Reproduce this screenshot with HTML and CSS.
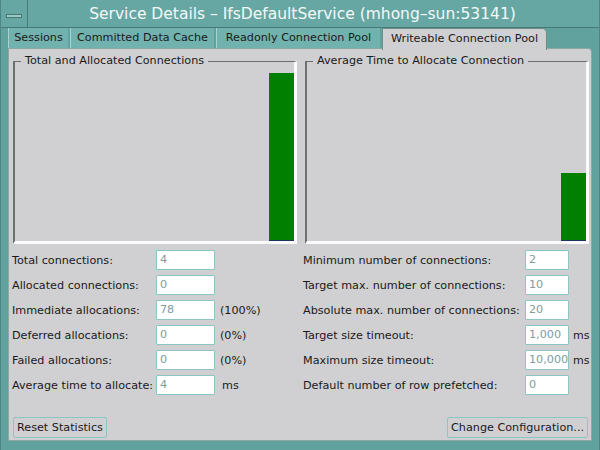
FILE: index.html
```html
<!DOCTYPE html>
<html>
<head>
<meta charset="utf-8">
<link rel="stylesheet" href="styles.css">
</head>
<body>
<div class="window">
  <div class="titlebar">
    <div class="menubtn"><span class="dash"></span></div>
    <div class="title">Service Details – IfsDefaultService (mhong–sun:53141)</div>
  </div>
  <div class="tabs">
    <div class="tab t1">Sessions</div>
    <div class="tab t2">Committed Data Cache</div>
    <div class="tab t3">Readonly Connection Pool</div>
    <div class="tab t4 active">Writeable Connection Pool</div>
  </div>
  <div class="panel">
    <div class="charts">
      <fieldset class="chart">
        <legend>Total and Allocated Connections</legend>
        <div class="plot"><div class="bar" style="height:168px"></div></div>
      </fieldset>
      <fieldset class="chart">
        <legend>Average Time to Allocate Connection</legend>
        <div class="plot"><div class="bar" style="height:68px"></div></div>
      </fieldset>
    </div>
    <div class="forms">
      <div class="form left">
        <span class="lbl">Total connections:</span><span class="fld">4</span><span class="suf"></span>
        <span class="lbl">Allocated connections:</span><span class="fld">0</span><span class="suf"></span>
        <span class="lbl">Immediate allocations:</span><span class="fld">78</span><span class="suf">(100%)</span>
        <span class="lbl">Deferred allocations:</span><span class="fld">0</span><span class="suf">(0%)</span>
        <span class="lbl">Failed allocations:</span><span class="fld">0</span><span class="suf">(0%)</span>
        <span class="lbl">Average time to allocate:</span><span class="fld">4</span><span class="suf ms">ms</span>
      </div>
      <div class="form right">
        <span class="lbl">Minimum number of connections:</span><span class="fld">2</span><span class="suf"></span>
        <span class="lbl">Target max. number of connections:</span><span class="fld">10</span><span class="suf"></span>
        <span class="lbl">Absolute max. number of connections:</span><span class="fld">20</span><span class="suf"></span>
        <span class="lbl">Target size timeout:</span><span class="fld">1,000</span><span class="suf">ms</span>
        <span class="lbl">Maximum size timeout:</span><span class="fld">10,000</span><span class="suf">ms</span>
        <span class="lbl">Default number of row prefetched:</span><span class="fld">0</span><span class="suf"></span>
      </div>
    </div>
    <div class="buttons">
      <button class="btn">Reset Statistics</button>
      <button class="btn">Change Configuration...</button>
    </div>
  </div>
</div>
</body>
</html>
```
FILE: styles.css
```css
* { box-sizing: border-box; }
html, body { margin: 0; padding: 0; }
body {
  width: 600px;
  height: 450px;
  overflow: hidden;
  font-family: "DejaVu Sans", sans-serif;
  font-size: 11px;
  color: #1a1a1a;
  background: #62a29e;
}
.window {
  width: 600px;
  height: 450px;
  display: flex;
  flex-direction: column;
  background: #62a29e;
  border-left: 1px solid #4d8683;
  border-right: 1px solid #4d8683;
}
.titlebar {
  height: 28px;
  display: flex;
  align-items: stretch;
  border-bottom: 1px solid #457a77;
  background: #67a7a3;
}
.menubtn {
  width: 27px;
  border-right: 1px solid #457a77;
  display: flex;
  align-items: center;
  justify-content: center;
  padding-top: 4px;
}
.dash {
  width: 16px;
  height: 4px;
  background: #9fc9c6;
  border: 1px solid #457a77;
}
.title {
  flex: 1;
  text-align: center;
  color: #f4f8f8;
  font-size: 15.5px;
  line-height: 28px;
  padding-right: 22px;
}
.tabs {
  height: 20px;
  display: flex;
  padding-left: 7px;
  background: #62a29e;
}
.tab {
  background: #72b2ae;
  line-height: 20px;
  margin-right: 2px;
  border-left: 1px solid #a8d4d0;
  font-size: 11.2px;
  text-align: center;
}
.t1 { width: 60px; }
.t2 { width: 144px; }
.t3 { width: 164px; }
.t4 { width: 165px; }
.tab.active {
  background: #d0d0d2;
  border: 1px solid #6f8e8c;
  border-bottom: none;
  border-top-right-radius: 5px;
  height: 22px;
  position: relative;
  z-index: 1;
}
.panel {
  flex: 1;
  margin: 0 7px 9px 7px;
  background: #d0d0d2;
  border: 1px solid #8ea8a6;
  border-top-right-radius: 4px;
  display: flex;
  flex-direction: column;
  padding: 6px 3px 2px 4px;
}
.charts {
  display: grid;
  grid-template-columns: 284px 284px;
  column-gap: 8px;
  height: 189px;
}
.chart {
  margin: 0;
  padding: 0;
  border-top: 1px solid #6e6e6e;
  border-left: 2px solid #6e6e6e;
  border-right: 3px solid #fbfbfb;
  border-bottom: 3px solid #fbfbfb;
  min-width: 0;
  display: flex;
}
.chart legend {
  padding: 0 4px 0 4px;
  margin-left: 6px;
  font-size: 11.2px;
  line-height: 12px;
}
.plot {
  flex: 1;
  display: flex;
  align-items: flex-end;
  justify-content: flex-end;
}
.bar {
  width: 25px;
  background: #007f00;
  border-bottom: 1px solid #203060;
}
.forms {
  display: flex;
  margin-top: 6px;
}
.form {
  display: grid;
  row-gap: 5px;
  grid-auto-rows: 20px;
  align-items: center;
}
.form.left {
  grid-template-columns: 144px 59px 80px;
  margin-left: -1px;
}
.form.right {
  grid-template-columns: 222px 44px 24px;
  margin-left: 8px;
}
.lbl {
  white-space: nowrap;
  font-size: 11.2px;
}
.fld {
  height: 20px;
  background: #ffffff;
  border: 1px solid #8cc6c4;
  border-radius: 1px;
  color: #7c9e9c;
  padding-left: 3px;
  line-height: 18px;
  font-size: 11.2px;
  white-space: nowrap;
  overflow: hidden;
}
.suf {
  padding-left: 5px;
  white-space: nowrap;
  font-size: 11.2px;
}
.form.right .suf { padding-left: 4px; font-size: 11px; }
.suf.ms { padding-left: 7px; }
.buttons {
  margin-top: auto;
  display: flex;
  justify-content: space-between;
}
.btn {
  font-family: "DejaVu Sans", sans-serif;
  font-size: 11.2px;
  color: #1a1a1a;
  background: #d0d0d2;
  border: 1px solid #8cc6c4;
  border-radius: 2px;
  height: 21px;
  padding: 0 3px;
}
```
